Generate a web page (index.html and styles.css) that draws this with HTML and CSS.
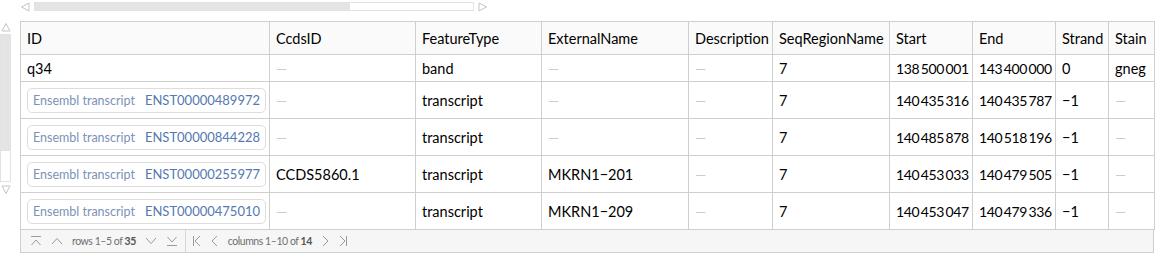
FILE: index.html
```html
<!DOCTYPE html>
<html>
<head>
<meta charset="utf-8">
<link rel="stylesheet" href="styles.css">
</head>
<body>
<div class="app">
  <div class="hscroll">
    <svg class="arrow" width="10" height="10" viewBox="0 0 10 10"><path d="M9 1 L1.5 5 L9 9 Z" fill="none" stroke="#c4c4c4" stroke-width="1"/></svg>
    <div class="htrack"><div class="hthumb"></div></div>
    <svg class="arrow" width="10" height="10" viewBox="0 0 10 10"><path d="M1 1 L8.5 5 L1 9 Z" fill="none" stroke="#c4c4c4" stroke-width="1"/></svg>
  </div>
  <div class="main">
    <div class="vscroll">
      <svg class="varrow" width="10" height="10" viewBox="0 0 10 10"><path d="M1 9 L5 1.5 L9 9 Z" fill="none" stroke="#c4c4c4" stroke-width="1"/></svg>
      <div class="vtrack"><div class="vthumb"></div></div>
      <svg class="varrow" width="10" height="10" viewBox="0 0 10 10"><path d="M1 1 L5 8.5 L9 1 Z" fill="none" stroke="#c4c4c4" stroke-width="1"/></svg>
    </div>
    <div class="frame">
      <table class="grid">
        <colgroup>
          <col class="c-id"><col class="c-ccds"><col class="c-ft"><col class="c-ext"><col class="c-desc"><col class="c-seq"><col class="c-start"><col class="c-end"><col class="c-strand"><col class="c-stain">
        </colgroup>
        <thead>
          <tr class="head"><th>ID</th><th>CcdsID</th><th>FeatureType</th><th>ExternalName</th><th>Description</th><th>SeqRegionName</th><th>Start</th><th>End</th><th>Strand</th><th>Stain</th></tr>
        </thead>
        <tbody>
          <tr class="short">
            <td>q34</td><td><span class="dash">—</span></td><td>band</td><td><span class="dash">—</span></td><td><span class="dash">—</span></td><td>7</td><td class="num">138&thinsp;500&thinsp;001</td><td class="num">143&thinsp;400&thinsp;000</td><td>0</td><td>gneg</td>
          </tr>
          <tr class="tall">
            <td><span class="chip"><span class="chip-label">Ensembl transcript</span><span class="chip-id">ENST00000489972</span></span></td><td><span class="dash">—</span></td><td>transcript</td><td><span class="dash">—</span></td><td><span class="dash">—</span></td><td>7</td><td class="num">140&thinsp;435&thinsp;316</td><td class="num">140&thinsp;435&thinsp;787</td><td>−1</td><td><span class="dash">—</span></td>
          </tr>
          <tr class="tall">
            <td><span class="chip"><span class="chip-label">Ensembl transcript</span><span class="chip-id">ENST00000844228</span></span></td><td><span class="dash">—</span></td><td>transcript</td><td><span class="dash">—</span></td><td><span class="dash">—</span></td><td>7</td><td class="num">140&thinsp;485&thinsp;878</td><td class="num">140&thinsp;518&thinsp;196</td><td>−1</td><td><span class="dash">—</span></td>
          </tr>
          <tr class="tall">
            <td><span class="chip"><span class="chip-label">Ensembl transcript</span><span class="chip-id">ENST00000255977</span></span></td><td>CCDS5860.1</td><td>transcript</td><td>MKRN1−201</td><td><span class="dash">—</span></td><td>7</td><td class="num">140&thinsp;453&thinsp;033</td><td class="num">140&thinsp;479&thinsp;505</td><td>−1</td><td><span class="dash">—</span></td>
          </tr>
          <tr class="tall">
            <td><span class="chip"><span class="chip-label">Ensembl transcript</span><span class="chip-id">ENST00000475010</span></span></td><td><span class="dash">—</span></td><td>transcript</td><td>MKRN1−209</td><td><span class="dash">—</span></td><td>7</td><td class="num">140&thinsp;453&thinsp;047</td><td class="num">140&thinsp;479&thinsp;336</td><td>−1</td><td><span class="dash">—</span></td>
          </tr>
        </tbody>
      </table>
      <div class="footer">
        <div class="pager">
          <svg class="ico" width="12" height="12" viewBox="0 0 12 12"><path d="M1 1.5h10 M1.5 10 L6 5 L10.5 10" fill="none" stroke="#9a9a9a"/></svg>
          <svg class="ico" width="12" height="12" viewBox="0 0 12 12"><path d="M1 9 L6 3.5 L11 9" fill="none" stroke="#9a9a9a"/></svg>
          <span class="ptext">rows 1–5 of <b>35</b></span>
          <svg class="ico" width="12" height="12" viewBox="0 0 12 12"><path d="M1 3 L6 8.5 L11 3" fill="none" stroke="#9a9a9a"/></svg>
          <svg class="ico" width="12" height="12" viewBox="0 0 12 12"><path d="M1.5 2 L6 7 L10.5 2 M1 10.5h10" fill="none" stroke="#9a9a9a"/></svg>
        </div>
        <div class="sep"></div>
        <div class="pager">
          <svg class="ico" width="9" height="12" viewBox="0 0 9 12"><path d="M1.5 1v10 M8 1 L3 6 L8 11" fill="none" stroke="#9a9a9a"/></svg>
          <svg class="ico" width="9" height="12" viewBox="0 0 9 12"><path d="M7 1 L2 6 L7 11" fill="none" stroke="#9a9a9a"/></svg>
          <span class="ptext">columns 1–10 of <b>14</b></span>
          <svg class="ico" width="9" height="12" viewBox="0 0 9 12"><path d="M2 1 L7 6 L2 11" fill="none" stroke="#9a9a9a"/></svg>
          <svg class="ico" width="9" height="12" viewBox="0 0 9 12"><path d="M1 1 L6 6 L1 11 M7.5 1v10" fill="none" stroke="#9a9a9a"/></svg>
        </div>
      </div>
    </div>
  </div>
</div>
</body>
</html>
```

FILE: styles.css
```css
html, body {
  margin: 0;
  padding: 0;
  background: #ffffff;
}
body {
  font-family: "Lato", "Open Sans", sans-serif;
  color: #000;
}
.app {
  width: 1156px;
  height: 254px;
  overflow: hidden;
}
.hscroll {
  display: flex;
  align-items: center;
  height: 11px;
  padding: 1px 0 0 20px;
}
.arrow {
  display: block;
  flex: none;
}
.htrack {
  margin: 0 4px 0 4px;
  width: 438px;
  height: 7px;
  border: 1px solid #e2e2e2;
  background: #fff;
  display: flex;
}
.hthumb {
  width: 315px;
  background: #e4e4e4;
}
.main {
  display: flex;
  margin-top: 9px;
}
.vscroll {
  width: 12px;
  flex: none;
  display: flex;
  flex-direction: column;
  align-items: flex-start;
}
.varrow {
  display: block;
  margin: 1px 0 0 1px;
}
.vtrack {
  margin-top: 2px;
  width: 9px;
  height: 146px;
  border: 1px solid #e2e2e2;
  display: flex;
  flex-direction: column;
  background: #fff;
}
.vthumb {
  height: 116px;
  background: #e4e4e4;
}
.vtrack + .varrow {
  margin-top: 3px;
}
.frame {
  margin-left: 8px;
  width: 1134px;
}
.grid {
  border-collapse: collapse;
  table-layout: fixed;
  width: 1134px;
  font-size: 14.5px;
}
.c-id { width: 249px; }
.c-ccds { width: 146px; }
.c-ft { width: 126px; }
.c-ext { width: 147px; }
.c-desc { width: 84px; }
.c-seq { width: 117px; }
.c-start { width: 83px; }
.c-end { width: 83px; }
.c-strand { width: 53px; }
.c-stain { width: 46px; }
.grid th, .grid td {
  border: 1px solid #cfcfcf;
  padding: 0 4px 0 6px;
  text-align: left;
  vertical-align: middle;
  white-space: nowrap;
  overflow: hidden;
}
.grid th {
  font-weight: normal;
  height: 32px;
  background: #fafafa;
}
.grid td.num {
  font-size: 14px;
  letter-spacing: -0.35px;
}
.short td {
  height: 26px;
}
.tall td {
  height: 36px;
}
.dash {
  color: #cccccc;
  font-size: 14px;
}
.chip {
  display: inline-flex;
  align-items: center;
  gap: 10px;
  height: 25px;
  padding: 0 4px 0 5px;
  border: 1px solid #dddddd;
  border-radius: 5px;
  box-sizing: border-box;
  width: 239px;
}
.chip-label {
  color: #7b93b6;
  font-size: 12.5px;
}
.chip-id {
  color: #5478b0;
  font-size: 13px;
}
.footer {
  display: flex;
  align-items: center;
  height: 22px;
  border: 1px solid #cfcfcf;
  border-top: none;
  background: #f6f6f6;
  padding-left: 9px;
}
.pager {
  display: flex;
  align-items: center;
  gap: 9px;
}
.ico {
  display: block;
}
.ptext {
  font-size: 10.5px;
  letter-spacing: -0.45px;
  color: #707070;
}
.ptext b {
  color: #555;
}
.sep {
  width: 1px;
  height: 22px;
  background: #d8d8d8;
  margin: 0 6px 0 7px;
}
```
